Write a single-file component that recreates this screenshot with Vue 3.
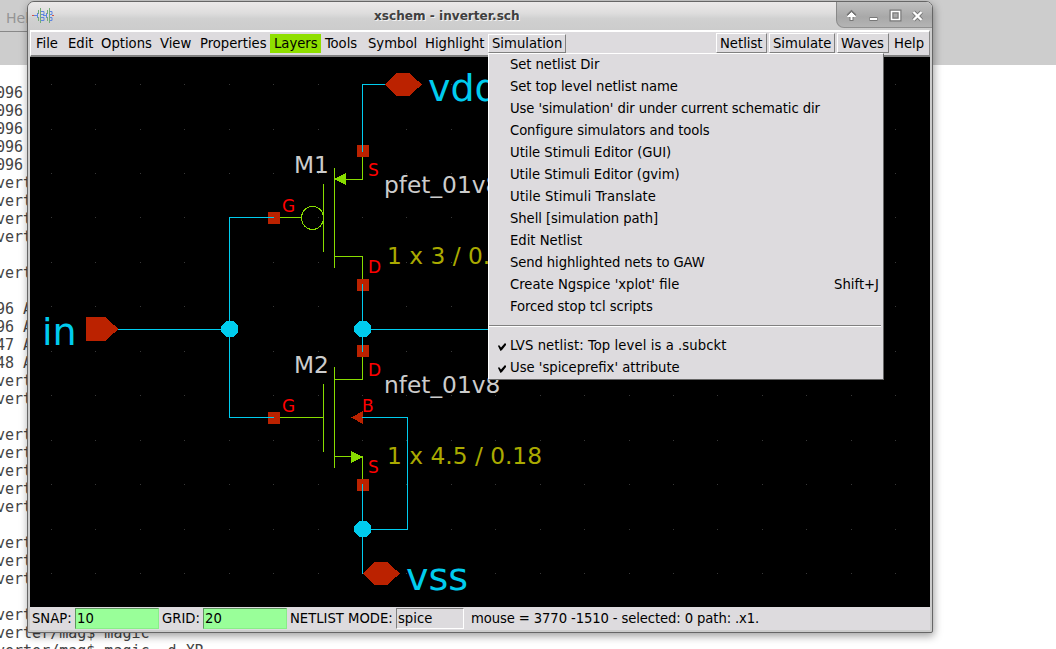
<script setup>
const terminalLines = [
  '096', '096', '096', '096', '096', 'verter/', 'verter/', 'verter/', 'verter/', '', 'verter/', '',
  '96 Apr', '96 Apr', '47 Apr', '48 Apr', 'verter/', 'verter/', '', 'verter/', 'verter/', 'verter/',
  'verter/', 'verter/', '', 'verter/', 'verter/', 'verter/', '', 'verter/', 'verter/mag$ magic',
  'verter/mag$ magic -d XR',
]
const menus = ['File', 'Edit', 'Options', 'View', 'Properties', 'Layers', 'Tools', 'Symbol', 'Highlight', 'Simulation']
const actions = ['Netlist', 'Simulate', 'Waves']
// fit: total width correction of the label in px, spread over its letters
const commands = [
  { label: 'Set netlist Dir', fit: -1 },
  { label: 'Set top level netlist name', fit: -2 },
  { label: "Use 'simulation' dir under current schematic dir", fit: -4.5 },
  { label: 'Configure simulators and tools', fit: -2.5 },
  { label: 'Utile Stimuli Editor (GUI)', fit: -0.5 },
  { label: 'Utile Stimuli Editor (gvim)', fit: -1 },
  { label: 'Utile Stimuli Translate', fit: 2 },
  { label: 'Shell [simulation path]', fit: -1.5 },
  { label: 'Edit Netlist', fit: 0 },
  { label: 'Send highlighted nets to GAW', fit: -3 },
  { label: "Create Ngspice 'xplot' file", fit: 0, key: 'Shift+J' },
  { label: 'Forced stop tcl scripts', fit: -2 },
]
const toggles = [
  { label: 'LVS netlist: Top level is a .subckt', fit: 3 },
  { label: "Use 'spiceprefix' attribute", fit: 0 },
]
const spacing = (item) => ({ letterSpacing: `${(item.fit / item.label.length).toFixed(3)}px` })

const dots = []
for (let r = 0; r < 12; r++) {
  for (let c = 0; c < 20; c++) {
    dots.push([Math.floor(51.4 + c * 44.44), Math.floor(84.6 + r * 44.44)])
  }
}
const pins = [[357, 145], [268, 212], [357, 279], [357, 345], [268, 412], [357, 479]]
const junctions = [[221, 321], [354, 321], [354, 521]]
const pinLabels = [
  ['S', 368, 176], ['G', 282, 212], ['D', 368, 273],
  ['D', 368, 376], ['B', 362, 412], ['G', 282, 412], ['S', 368, 473],
]
</script>

<template>
  <div class="desktop">
    <div class="back-head"><span class="back-menu">Help</span></div>
    <div class="terminal">
      <div v-for="(l, i) in terminalLines" :key="i" class="tline">{{ l }}</div>
    </div>

    <div class="window">
      <header class="title">
        <svg class="logo" width="22" height="16" viewBox="0 0 22 16" fill="none">
          <path d="M2 7.500H5M11 7.500h3M5.500 5v5M14.500 5v5M8 3.500h4v3H8M8 9.500h4v3H8M17 3.500h3v3h-3M17 9.500h3v3h-3" stroke="#5f86e0" />
          <path d="M8.500 0v15M17.500 0v15M6.500 2v4M6.500 9v4M15.500 2v4M15.500 9v4" stroke="#74ac78" />
          <path d="M0 7.500h2M20 7.500h2" stroke="#d4564a" />
        </svg>
        <div class="caption">xschem - inverter.sch</div>
        <div class="controls">
          <svg width="95" height="26" viewBox="0 0 95 26">
            <g fill="none" stroke="#777" stroke-width="4">
              <path d="M14.500 19v-6M11 14l3.500-3.500L18 14" />
              <path d="M32.500 17h8" />
              <path d="M54.500 9.500h8v8h-8z" />
              <path d="M76.500 10l8 8M84.500 10l-8 8" />
            </g>
            <g fill="none" stroke="#fff" stroke-width="2">
              <path d="M14.500 18v-6" /><path d="M10.500 14.500l4-4 4 4z" fill="#fff" stroke-width="1" />
              <path d="M33 17h7" />
              <path d="M54.500 9.500h8v8h-8z" stroke-width="1.600" />
              <path d="M76.500 10l8 8M84.500 10l-8 8" stroke-width="2.400" />
            </g>
          </svg>
        </div>
      </header>

      <nav class="menubar">
        <div class="menus">
          <span v-for="m in menus" :key="m" class="menu" :class="{ lit: m === 'Layers', open: m === 'Simulation' }">{{ m }}</span>
        </div>
        <div class="actions">
          <span v-for="a in actions" :key="a" class="action">{{ a }}</span>
          <span class="help">Help</span>
        </div>
      </nav>

      <svg class="canvas" width="900" height="550" viewBox="30 57 900 550">
        <g fill="#383838">
          <rect v-for="(d, i) in dots" :key="i" :x="d[0]" :y="d[1]" width="1" height="1" />
        </g>
        <g fill="#bb2200" shape-rendering="crispEdges">
          <rect v-for="(p, i) in pins" :key="i" :x="p[0]" :y="p[1]" width="12" height="12" />
          <path d="M385 84.500L397 73h12l13 11.500L409 96h-12z" />
          <path d="M363 573.500L375 562h12l13 11.500L387 585h-12z" />
          <path d="M86 317h19l13.500 12L105 341H86z" />
          <path d="M351 417.500l12-6.500v13z" />
        </g>
        <g fill="none" stroke="#88dd00" shape-rendering="crispEdges">
          <path d="M323.500 184v68M334.500 168v100M346 179.500h16.500V157M334 256.500h28.500V279M280 217.500h21" />
          <path d="M323.500 384v68M334.500 367v101M334 379.500h28.500V357M334 456.500h28.500V479M280 417.500h43" />
          <ellipse cx="312.500" cy="217.900" rx="11" ry="11.600" />
        </g>
        <g fill="#88dd00" shape-rendering="crispEdges">
          <path d="M334 179l12-6v12z" />
          <path d="M363 457l-12-6v12z" />
        </g>
        <g fill="none" stroke="#00ccee" shape-rendering="crispEdges">
          <path d="M385 84.500H362.500V152M274 217.500H229.500V417.500H274M118 329.500H229M362.500 284V352M362 329.500H560" />
          <path d="M362 417.500h45.500V529.500H362M362.500 484V574" />
        </g>
        <g fill="#00ccee" shape-rendering="crispEdges">
          <path v-for="(j, i) in junctions" :key="i" :d="`M${j[0] + 5} ${j[1]}h7l5 5v6l-5 5h-7l-5-5v-6z`" />
        </g>
        <g class="net" fill="#00ccee">
          <text x="42" y="345">in</text><text x="428" y="101">vdd</text><text x="406" y="590">vss</text>
        </g>
        <g class="part" fill="#cccccc">
          <text x="294" y="173">M1</text><text x="294" y="373">M2</text>
          <text x="384" y="193">pfet_01v8</text><text x="384" y="393">nfet_01v8</text>
        </g>
        <g class="part" fill="#aaaa00">
          <text x="387" y="264">1 x 3 / 0.18</text><text x="387" y="464">1 x 4.5 / 0.18</text>
        </g>
        <g class="pin" fill="#ff0000">
          <text v-for="(t, i) in pinLabels" :key="i" :x="t[1]" :y="t[2]">{{ t[0] }}</text>
        </g>
      </svg>

      <footer class="status">
        <span>SNAP:</span><span class="entry">10</span>
        <span>GRID:</span><span class="entry">20</span>
        <span>NETLIST MODE:</span><span class="entry mode">spice</span>
        <span class="mouse">mouse = 3770 -1510 - selected: 0 path: .x1.</span>
      </footer>
    </div>

    <div class="dropdown">
      <div v-for="c in commands" :key="c.label" class="row"><span :style="spacing(c)">{{ c.label }}</span><span>{{ c.key }}</span></div>
      <div class="sep"></div>
      <div v-for="t in toggles" :key="t.label" class="row">
        <svg class="check" width="8" height="8" viewBox="0 0 8 8"><path d="M0 3l1-1 2 2.500L7 0l1 1v1L4 7 2.500 8z" fill="#000" /></svg>
        <span :style="spacing(t)">{{ t.label }}</span>
      </div>
    </div>
  </div>
</template>

<style>
body { margin: 0; overflow: hidden; }
</style>

<style scoped>
.desktop {
  position: relative; width: 1056px; height: 649px; overflow: hidden; background: #fff; color: #000;
  font: 14.67px/20px "DejaVu Sans Condensed", "DejaVu Sans", sans-serif; font-stretch: condensed;
  white-space: pre;
}
.back-head {
  height: 65px; background: linear-gradient(#888, #888) 0 31px / 28px 1px no-repeat #cdcdcd;
}
.back-menu { display: block; padding: 8px 0 0 6px; color: #959595; font: 14px/20px "DejaVu Sans", sans-serif; }
.terminal { margin: 19px 0 0 -4px; color: #444; font: 15px/18px "DejaVu Sans Mono", monospace; }
.tline { height: 18px; }
.window {
  position: absolute; left: 27px; top: 1px; width: 902px; height: 630px; border: 1px solid #666;
  padding-left: 2px; border-radius: 7px 7px 2px 2px; background: #ccc;
  box-shadow: 1px 3px 9px rgba(0, 0, 0, .38); display: flex; flex-direction: column;
}
.title {
  height: 28px; margin-left: -2px; display: grid; grid-template-columns: 33px 1fr 96px;
  border-radius: 6px 6px 0 0; background: linear-gradient(#ebe9e9, #dedddd 40%, #d0d0d0 60%, #cccccc);
}
.logo { margin: 6px 0 0 4px; }
.caption {
  padding-left: 313px; color: #404040; font: bold 12.1px/29px "DejaVu Sans", sans-serif;
  font-stretch: normal; text-shadow: 1px 1px 0 #f2f2f2;
}
.controls {
  height: 26px; border-left: 1px solid #888; border-bottom: 1px solid #909090; border-radius: 0 6px 0 8px;
  box-sizing: border-box; background: linear-gradient(#c0c0c0, #a8a8a8 60%, #b4b4b4);
}
.menubar {
  box-sizing: border-box; width: 900px; height: 27px; display: flex; justify-content: space-between;
  background: #dddbde; border: solid; border-width: 2px 1px 2px 1px; border-color: #fff #888 #808080 #fff;
}
.menus {
  display: grid; grid-template-columns: 32px 33px 59px 40px 74px 51px 43px 57px 67px 78px;
  margin-left: 1px; padding-top: 2px;
}
.menu { height: 19px; line-height: 17px; padding-left: 4px; box-sizing: border-box; }
.lit { background: #8fdf00; }
.open { border: 1px solid; border-color: #fff #808080 #808080 #fff; padding-left: 3px; line-height: 15px; }
.actions { display: grid; grid-template-columns: 51px 66px 52px 38px; column-gap: 2px; padding-top: 1px; }
.action {
  height: 20px; box-sizing: border-box; padding-left: 3px; line-height: 17px;
  border: 1px solid; border-color: #fff #808080 #808080 #fff;
}
.help { padding-left: 3px; line-height: 19px; }
.canvas { display: block; background: #000; flex: none; }
.net { font: 38px "DejaVu Sans", sans-serif; font-stretch: normal; }
.part { font: 23.300px "DejaVu Sans", sans-serif; font-stretch: normal; }
.pin { font: 17px "DejaVu Sans", sans-serif; font-stretch: normal; }
.status {
  width: 900px; height: 23px; box-sizing: border-box; background: #dddbde; display: grid;
  grid-template-columns: 43px 84px 44px 84px 109px 68px auto; padding: 1px 0 0 2px; line-height: 19px;
}
.status > span { height: 21px; box-sizing: border-box; }
.status > span:nth-child(3), .status > span:nth-child(5) { padding-left: 3px; }
.status .entry { background: #99ff99; border: 1px solid; border-color: #5f945f #88ee88 #88ee88 #5f945f; padding-left: 1px; line-height: 17px; }
.status .mode { background: #dddbde; border-color: #808080 #fff #fff #808080; }
.status .mouse { padding-left: 7px; letter-spacing: -.11px; }
.dropdown {
  position: absolute; left: 488px; top: 53px; width: 394px; height: 325px; background: #dddbde;
  border: 1px solid; border-color: #fff #666 #666 #fff;
}
.row {
  position: relative; height: 22px; line-height: 21px; padding: 0 4px 0 21px; display: flex; justify-content: space-between;
}
.row:first-child { margin-top: -1px; }
.check { position: absolute; left: 9px; top: 9px; }
.sep { height: 17px; margin-right: 2px; background: linear-gradient(#808080 50%, #fff 50%) 0 8px / 100% 2px no-repeat; }
</style>
